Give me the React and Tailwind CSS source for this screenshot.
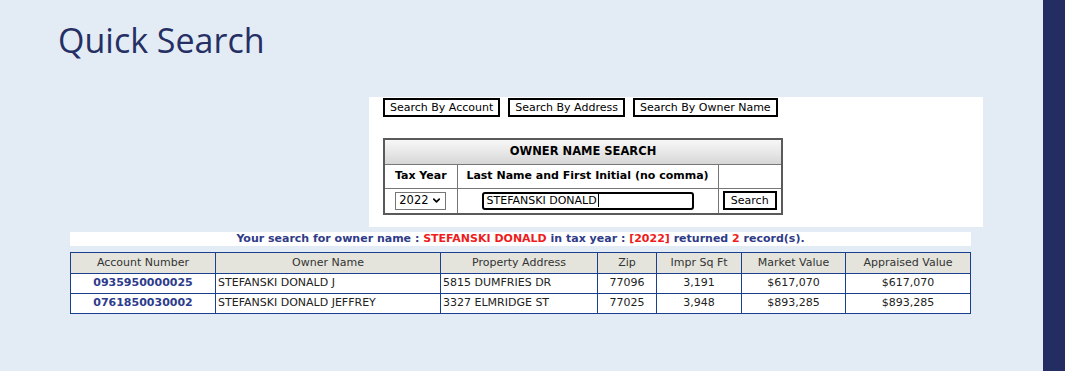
import { ChevronDown } from 'lucide-react';

const results = [
  { account: '0935950000025', owner: 'STEFANSKI DONALD J', address: '5815 DUMFRIES DR', zip: '77096', sqft: '3,191', market: '$617,070', appraised: '$617,070' },
  { account: '0761850030002', owner: 'STEFANSKI DONALD JEFFREY', address: '3327 ELMRIDGE ST', zip: '77025', sqft: '3,948', market: '$893,285', appraised: '$893,285' },
];

const tabs = ['Search By Account', 'Search By Address', 'Search By Owner Name'];

const verdana = { fontFamily: '"DejaVu Sans", Verdana, sans-serif' };

const App = () => {
  return (
    <div className="flex h-[371px] w-[1065px] overflow-hidden bg-[#e3ebf5]">
      <div className="flex-1 min-w-0">
        <h1 className="ml-[58px] mt-[16px] text-[34px] leading-[48px] text-[#252f63]" style={{ fontFamily: '"Open Sans", sans-serif' }}>
          Quick Search
        </h1>

        <div className="ml-[369px] mt-[33px] h-[130px] w-[614px] bg-white pl-[14px] pt-[1px] text-[11px] text-black" style={verdana}>
          <div className="flex gap-[8px]">
            {tabs.map((t) => (
              <button key={t} className="h-[19px] border-2 border-black bg-white px-[5px] leading-[15px] text-[11px]">
                {t}
              </button>
            ))}
          </div>

          <table className="mt-[21px] w-[400px] border-collapse border-2 border-[#5a5a5a]">
            <tbody>
              <tr>
                <td colSpan={3} className="h-[25px] border border-[#777] bg-gradient-to-b from-[#f7f7f7] via-[#e8e8e8] to-[#d6d6d6] text-center text-[11.5px] font-bold">
                  OWNER NAME SEARCH
                </td>
              </tr>
              <tr>
                <td className="h-[24px] w-[73px] border border-[#777] text-center font-bold">Tax Year</td>
                <td className="w-[261px] border border-[#777] text-center font-bold">Last Name and First Initial (no comma)</td>
                <td className="border border-[#777]"></td>
              </tr>
              <tr>
                <td className="h-[26px] border border-[#777] text-center">
                  <div className="inline-flex h-[18px] w-[51px] items-center justify-between border border-[#767676] px-[3px] text-[11.5px] leading-none">
                    2022
                    <ChevronDown size={11} strokeWidth={3.5} />
                  </div>
                </td>
                <td className="border border-[#777]">
                  <div className="ml-[24px] flex h-[18px] w-[212px] items-center rounded-[3px] border-2 border-black px-[3px] text-[11px] leading-none">
                    STEFANSKI DONALD<span className="ml-px inline-block h-[13px] w-px bg-black" />
                  </div>
                </td>
                <td className="border border-[#777] text-center">
                  <button className="h-[19px] border-2 border-black bg-white px-[6px] leading-[15px] text-[11px]">Search</button>
                </td>
              </tr>
            </tbody>
          </table>
        </div>

        <div className="ml-[70px] mt-[5px] w-[901px]" style={verdana}>
          <div className="h-[14px] bg-white text-center text-[11px] font-bold leading-[14px] text-[#2f3b87]">
            Your search for owner name : <span className="text-[#ee1c1c]">STEFANSKI DONALD</span> in tax year : <span className="text-[#ee1c1c]">[2022]</span> returned <span className="text-[#ee1c1c]">2</span> record(s).
          </div>

          <table className="mt-[6px] w-full border-collapse border border-[#1b3f8f] text-[11px]">
            <thead>
              <tr className="h-[21px] bg-[#e4e4dc] text-[#333]">
                <th className="w-[145px] border border-[#1b3f8f] font-normal">Account Number</th>
                <th className="w-[225px] border border-[#1b3f8f] font-normal">Owner Name</th>
                <th className="w-[157px] border border-[#1b3f8f] font-normal">Property Address</th>
                <th className="w-[59px] border border-[#1b3f8f] font-normal">Zip</th>
                <th className="w-[85px] border border-[#1b3f8f] font-normal">Impr Sq Ft</th>
                <th className="w-[104px] border border-[#1b3f8f] font-normal">Market Value</th>
                <th className="border border-[#1b3f8f] font-normal">Appraised Value</th>
              </tr>
            </thead>
            <tbody className="bg-white text-[#222]">
              {results.map((r) => (
                <tr key={r.account} className="h-[20px]">
                  <td className="border border-[#1b3f8f] text-center font-bold text-[#2e3c8c]">{r.account}</td>
                  <td className="border border-[#1b3f8f] pl-[2px]">{r.owner}</td>
                  <td className="border border-[#1b3f8f] pl-[2px]">{r.address}</td>
                  <td className="border border-[#1b3f8f] text-center">{r.zip}</td>
                  <td className="border border-[#1b3f8f] text-center">{r.sqft}</td>
                  <td className="border border-[#1b3f8f] text-center">{r.market}</td>
                  <td className="border border-[#1b3f8f] text-center">{r.appraised}</td>
                </tr>
              ))}
            </tbody>
          </table>
        </div>
      </div>

      <div className="w-[22px] shrink-0 bg-[#232d62]" />
    </div>
  );
};

export default App;
